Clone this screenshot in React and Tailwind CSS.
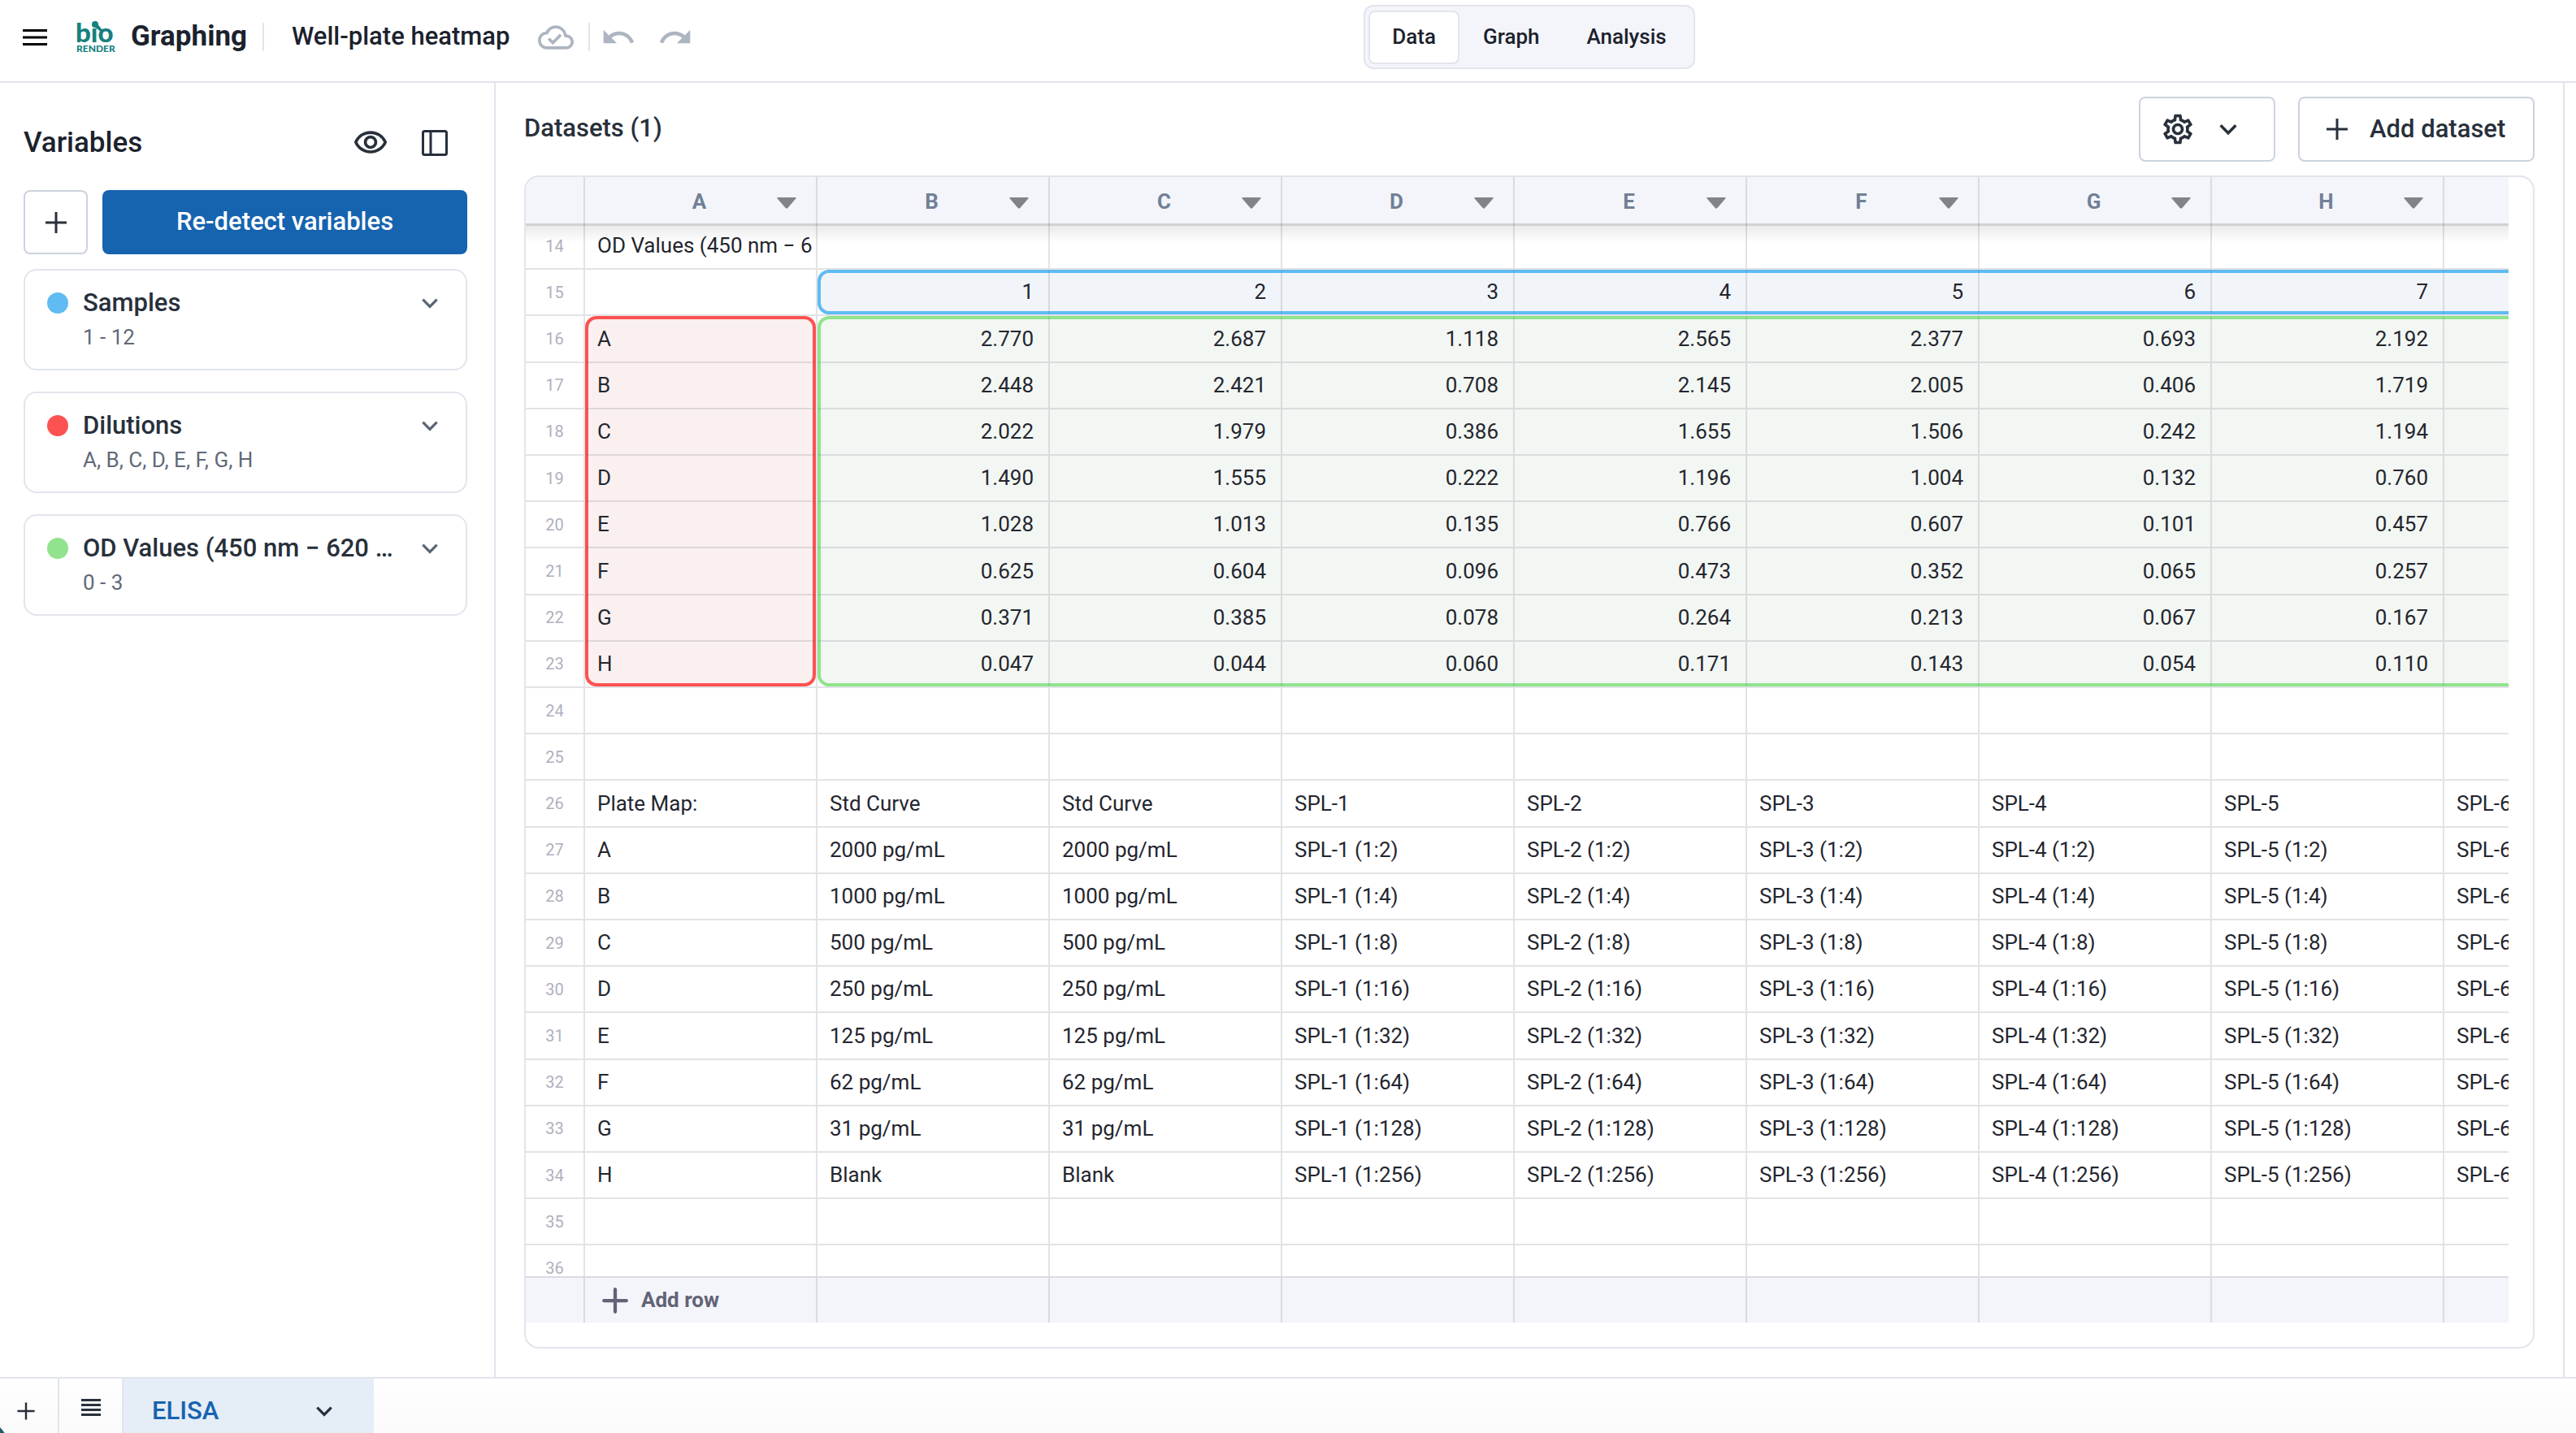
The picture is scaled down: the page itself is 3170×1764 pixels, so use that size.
import { useState } from "react";
import clsx from "clsx";
import {
  MdOutlineCloudDone,
  MdOutlineSettings,
  MdOutlineVisibility,
  MdRedo,
  MdUndo,
} from "react-icons/md";

const columns = ["A", "B", "C", "D", "E", "F", "G", "H", "I"];

const variables = [
  { name: "Samples", range: "1 - 12", dot: "bg-[#5fbbf2]" },
  { name: "Dilutions", range: "A, B, C, D, E, F, G, H", dot: "bg-[#fd5252]" },
  { name: "OD Values (450 nm − 620 nm)", range: "0 - 3", dot: "bg-[#91e38d]" },
];

const odValues = [
  ["A", "2.770", "2.687", "1.118", "2.565", "2.377", "0.693", "2.192"],
  ["B", "2.448", "2.421", "0.708", "2.145", "2.005", "0.406", "1.719"],
  ["C", "2.022", "1.979", "0.386", "1.655", "1.506", "0.242", "1.194"],
  ["D", "1.490", "1.555", "0.222", "1.196", "1.004", "0.132", "0.760"],
  ["E", "1.028", "1.013", "0.135", "0.766", "0.607", "0.101", "0.457"],
  ["F", "0.625", "0.604", "0.096", "0.473", "0.352", "0.065", "0.257"],
  ["G", "0.371", "0.385", "0.078", "0.264", "0.213", "0.067", "0.167"],
  ["H", "0.047", "0.044", "0.060", "0.171", "0.143", "0.054", "0.110"],
];

const standards = ["2000 pg/mL", "1000 pg/mL", "500 pg/mL", "250 pg/mL", "125 pg/mL", "62 pg/mL", "31 pg/mL", "Blank"];
const samples = ["SPL-1", "SPL-2", "SPL-3", "SPL-4", "SPL-5", "SPL-6"];

const plateMap = standards.map((std, i) => [
  "ABCDEFGH"[i],
  std,
  std,
  ...samples.map((s) => `${s} (1:${2 ** (i + 1)})`),
]);

const rows = [
  ["OD Values (450 nm − 620 nm)"],
  ["", "1", "2", "3", "4", "5", "6", "7"],
  ...odValues,
  [],
  [],
  ["Plate Map:", "Std Curve", "Std Curve", ...samples],
  ...plateMap,
  [],
  [],
];

const FIRST_ROW = 14;

// variable ranges, keyed by the cell they start in
const ranges = {
  B15: "h-full w-[3430px] border-[#5fbbf2] bg-[#f1f5f9]",
  A16: "h-[456px] w-full border-[#fd5252] bg-[#faf0ef]",
  B16: "h-[456px] w-[3430px] border-[#91e38d] bg-[#f3f7f3]",
};

const Chevron = ({ className }) => (
  <svg viewBox="0 0 24 24" fill="none" stroke="currentColor" strokeWidth="3" className={className} aria-hidden="true">
    <path d="M4 8l8 8 8-8" />
  </svg>
);

const Plus = ({ className, strokeWidth = 3, round = false }) => (
  <svg
    viewBox="0 0 32 32"
    fill="none"
    stroke="currentColor"
    strokeWidth={strokeWidth}
    strokeLinecap={round ? "round" : "butt"}
    className={className}
    aria-hidden="true"
  >
    <path d="M16 3v26M3 16h26" />
  </svg>
);

const Logo = () => (
  <svg viewBox="0 0 44 40" className="h-[40px] w-[44px] overflow-visible" fill="#17807f" fontFamily="Lato" fontWeight="900">
    <text x="-2" y="26" fontSize="33">bio</text>
    <text x="-1" y="38" fontSize="12">RENDER</text>
    <circle cx="22" cy="4" r="4" />
    <path d="M24 2l7 9-2 2-8-6z" />
  </svg>
);

const Header = () => {
  const [tab, setTab] = useState("Data");

  return (
    <header className="flex h-[102px] shrink-0 items-center border-b-2 border-[#e1e5ec] pb-[9px]">
      <div className="flex w-[864px] shrink-0 items-center pl-[28px]">
        <button aria-label="Menu" className="text-black">
          <svg viewBox="0 0 30 20" className="h-[20px] w-[30px]" fill="currentColor">
            <path d="M0 0h30v3H0zM0 8.500h30v3H0zM0 17h30v3H0z" />
          </svg>
        </button>
        <div className="ml-[37px]"><Logo /></div>
        <span className="ml-[22px] text-[35px] font-bold text-[#1b222d]">Graphing</span>
        <div className="ml-[19px] h-[35px] w-[2px] bg-[#e1e5ec]" />
        <h1 className="ml-[34px] whitespace-nowrap text-[31px] font-medium text-[#1b222d]">Well-plate heatmap</h1>
        <MdOutlineCloudDone className="ml-auto size-[44px] shrink-0 text-[#adb5c1]" />
        <div className="ml-[18px] h-[35px] w-[2px] shrink-0 bg-[#e1e5ec]" />
        <button aria-label="Undo" className="ml-[13px] text-[#adb5c1]"><MdUndo className="size-[44px]" /></button>
        <button aria-label="Redo" className="mr-[11px] ml-[26px] text-[#adb5c1]"><MdRedo className="size-[44px]" /></button>
      </div>
      <nav className="flex flex-1 justify-center pr-[270px]">
        <div className="flex h-[79px] items-center rounded-[12px] border-2 border-[#e1e5ec] bg-[#f4f5fa] px-[4px]">
          {["Data", "Graph", "Analysis"].map((t) => (
            <button
              key={t}
              onClick={() => setTab(t)}
              className={clsx(
                "h-[66px] rounded-[8px] border-2 px-[27px] text-[26px] font-medium text-[#1b222d]",
                t === tab ? "border-[#e1e5ec] bg-white" : "border-transparent"
              )}
            >
              {t}
            </button>
          ))}
        </div>
      </nav>
    </header>
  );
};

const Sidebar = () => (
  <aside className="w-[610px] shrink-0 border-r-2 border-[#e1e5ec] pt-[34px] pr-[33px] pl-[29px] text-[#28303b]">
    <div className="flex h-[80px] items-center">
      <h2 className="flex-1 text-[35px] font-medium text-[#1b222d]">Variables</h2>
      <button aria-label="Show variables"><MdOutlineVisibility className="size-[44px]" /></button>
      <button aria-label="Collapse panel" className="mr-[24px] ml-[41px]">
        <svg viewBox="0 0 32 32" className="size-[32px]" fill="none" stroke="currentColor" strokeWidth="3">
          <rect x="1.500" y="1.500" width="29" height="29" rx="2" />
          <path d="M11 2v28" />
        </svg>
      </button>
    </div>
    <div className="mt-[18px] flex gap-[18px]">
      <button aria-label="Add variable" className="flex h-[79px] w-[79px] items-center justify-center rounded-[8px] border-2 border-[#cbd3de]">
        <Plus className="size-[32px]" />
      </button>
      <button className="h-[79px] flex-1 rounded-[8px] bg-[#1663af] text-[31px] font-medium text-white">Re-detect variables</button>
    </div>
    <div className="mt-[18px] flex flex-col gap-[26px]">
      {variables.map((v) => (
        <div key={v.name} className="h-[125px] rounded-[16px] border-2 border-[#e1e5ec] pt-[20px] pr-[31px] pl-[27px]">
          <div className="flex h-[40px] items-center">
            <span className={clsx("size-[26px] shrink-0 rounded-full", v.dot)} />
            <h3 className="ml-[18px] flex-1 truncate text-[31px] leading-[40px] font-medium">{v.name}</h3>
            <button aria-label={`Expand ${v.name}`} className="ml-[28px] text-[#5b6675]">
              <Chevron className="size-[26px]" />
            </button>
          </div>
          <p className="pl-[44px] text-[26px] leading-[44px] text-[#5f6978]">{v.range}</p>
        </div>
      ))}
    </div>
  </aside>
);

const DataGrid = () => (
  <div className="min-h-0 flex-1 overflow-hidden rounded-[18px] border-2 border-[#e1e5ec] pr-[30px] pb-[30px]">
    <div className="relative isolate h-full overflow-hidden">
      <table className="h-[1430px] w-[2647px] table-fixed border-separate border-spacing-0 text-[26px] text-[#24262f]">
        <colgroup>
          <col className="w-[73px]" />
          {columns.map((c) => <col key={c} className="w-[286px]" />)}
        </colgroup>
        <thead>
          <tr className="h-[57px] bg-[#f4f5fa]">
            <th className="border-r-2 border-[#737483]/20" />
            {columns.map((c) => (
              <th key={c} className="relative border-r-2 border-[#737483]/20 p-0 pt-[4px] pr-[3px] text-center font-bold text-[#718096]">
                {c}
                <button aria-label={`Column ${c} menu`} className="absolute top-[25px] right-[24px]">
                  <svg viewBox="0 0 24 14" className="h-[14px] w-[24px]" fill="#808488">
                    <path d="M1.500 0h21q2 0 .8 1.600l-10 11.500q-1.300 1.300-2.600 0L.7 1.600Q-.5 0 1.500 0z" />
                  </svg>
                </button>
              </th>
            ))}
          </tr>
        </thead>
        <tbody>
          {rows.map((row, r) => (
            <tr key={r} className="h-[57px]">
              <td className="border-r-2 border-b-2 border-[#737483]/20 p-0 text-center text-[20px] text-[#b0b0c0]">
                {FIRST_ROW + r}
              </td>
              {columns.map((c, i) => {
                const value = row[i] ?? "";
                const range = ranges[`${c}${FIRST_ROW + r}`];
                return (
                  <td key={c} className="relative border-r-2 border-b-2 border-[#737483]/20 p-0">
                    {range && <div className={clsx("absolute top-0 left-0 -z-10 rounded-[14px] border-4", range)} />}
                    <div
                      className={clsx(
                        "mr-[4px] overflow-hidden pl-[15px] whitespace-nowrap",
                        value !== "" && !isNaN(value) && "pr-[14px] text-right"
                      )}
                    >
                      {value}
                    </div>
                  </td>
                );
              })}
            </tr>
          ))}
        </tbody>
        <tfoot className="sticky bottom-0">
          <tr className="h-[57px] bg-[#f4f5fa]">
            <td className="border-t-2 border-r-2 border-[#737483]/20" />
            {columns.map((c) => (
              <td key={c} className="border-t-2 border-r-2 border-[#737483]/20 p-0">
                {c === "A" && (
                  <button className="flex items-center gap-[15px] pl-[20px] font-bold text-[#636277]">
                    <Plus className="size-[34px]" strokeWidth={4} round />
                    Add row
                  </button>
                )}
              </td>
            ))}
          </tr>
        </tfoot>
      </table>
      <div className="pointer-events-none absolute inset-x-0 top-[57px] h-[24px] border-t-3 border-black/18 bg-linear-to-b from-black/8 to-transparent bg-clip-padding" />
    </div>
  </div>
);

const Datasets = () => (
  <main className="flex min-w-0 flex-1 flex-col px-[35px] pt-[17px] pb-[35px] text-[#28303b]">
    <div className="mb-[17px] flex h-[80px] items-center">
      <h2 className="flex-1 pb-[2px] text-[31px] font-medium">Datasets (1)</h2>
      <button aria-label="Settings" className="flex h-[80px] w-[168px] items-center gap-[26px] rounded-[8px] border-2 border-[#cbd3de] pl-[24px]">
        <MdOutlineSettings className="size-[44px]" />
        <Chevron className="size-[28px]" />
      </button>
      <button className="ml-[28px] flex h-[80px] w-[291px] items-center gap-[24px] rounded-[8px] border-2 border-[#cbd3de] pl-[30px] text-[31px] font-medium whitespace-nowrap">
        <Plus className="size-[32px]" />
        Add dataset
      </button>
    </div>
    <DataGrid />
  </main>
);

const SheetBar = () => (
  <footer className="relative flex h-[69px] shrink-0 items-start overflow-hidden border-t-2 border-[#e1e5ec] bg-linear-to-b from-white to-[#fafafa] text-[#28303b]">
    <button aria-label="Add sheet" className="flex h-[80px] w-[73px] items-center border-r-2 border-[#e1e5ec] pl-[19px]">
      <Plus className="size-[26px]" />
    </button>
    <button aria-label="All sheets" className="flex h-[80px] w-[79px] items-center justify-center border-r-2 border-[#e1e5ec] pb-[8px]">
      <svg viewBox="0 0 24 22" className="h-[22px] w-[24px]" fill="currentColor">
        <path d="M0 0h24v3H0zM0 6h24v3H0zM0 12h24v3H0zM0 18h24v3H0z" />
      </svg>
    </button>
    <button className="flex h-[80px] w-[308px] items-center justify-between bg-[#e5edf6] pr-[48px] pl-[35px] text-[31px] font-medium text-[#1663af]">
      ELISA
      <Chevron className="size-[26px] text-[#28303b]" />
    </button>
    <div className="absolute bottom-[-75px] left-[-82px] size-[96px] rounded-full bg-[#1f5f66]" />
  </footer>
);

const App = () => {
  return (
    <div className="flex h-screen flex-col overflow-hidden bg-white font-[Roboto,sans-serif]">
      <Header />
      <div className="flex min-h-0 flex-1">
        <Sidebar />
        <Datasets />
        <div className="w-[16px] shrink-0 border-l-2 border-[#e1e5ec]" />
      </div>
      <SheetBar />
    </div>
  );
};

export default App;
